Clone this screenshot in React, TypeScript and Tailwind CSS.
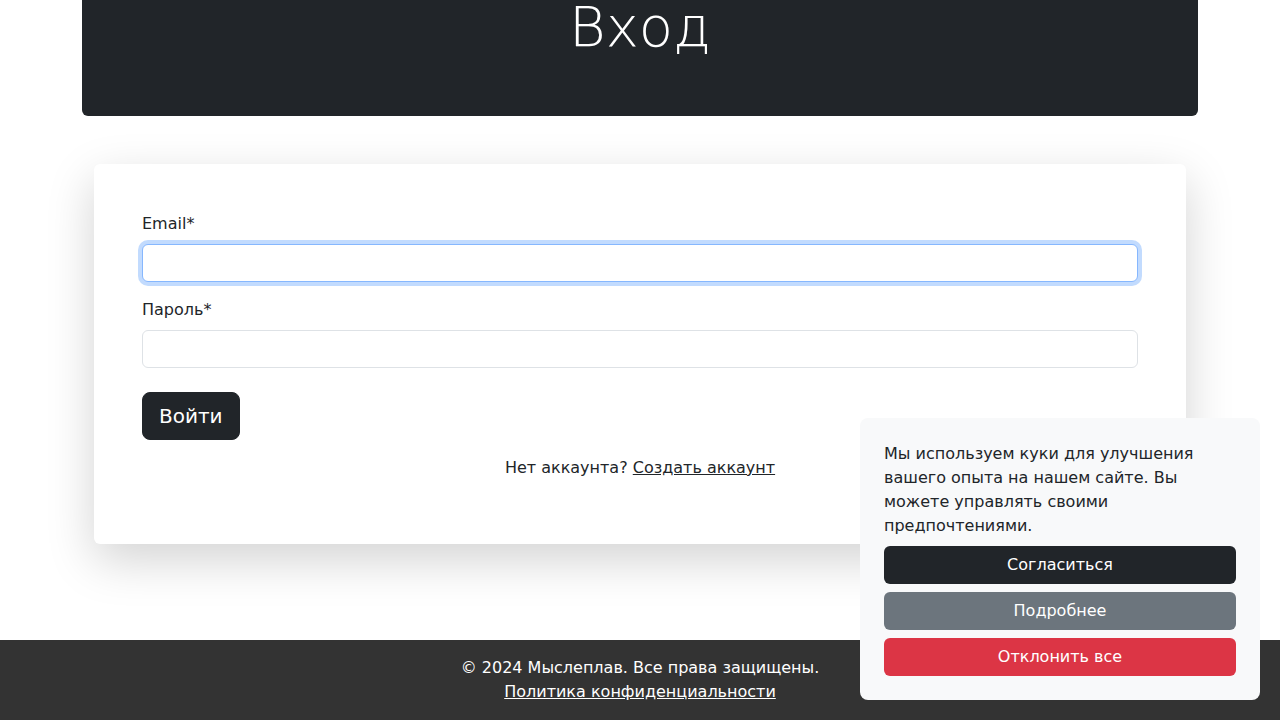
const font = { fontFamily: '"DejaVu Sans", "Liberation Sans", sans-serif' }

const Field = ({ label, focused, last }: { label: string; focused?: boolean; last?: boolean }) => (
    <div className={last ? 'mb-6' : 'mb-4'}>
        <label className="mb-2 block text-base leading-6 text-[#212529]">{label}</label>
        <input
            type="text"
            className={
                focused
                    ? 'block h-[38px] w-full rounded-md border border-[#86b7fe] bg-white px-3 outline-none shadow-[0_0_0_4px_rgba(13,110,253,0.25)]'
                    : 'block h-[38px] w-full rounded-md border border-[#dee2e6] bg-white px-3 outline-none'
            }
        />
    </div>
)

const CookieBanner = () => (
    <div className="fixed right-5 bottom-5 w-[400px] rounded-lg bg-[#f8f9fa] p-6 text-[#212529]">
        <p className="mb-2 text-base leading-6">
            Мы используем куки для улучшения вашего опыта на нашем сайте. Вы можете управлять своими
            предпочтениями.
        </p>
        <div className="flex flex-col gap-2">
            <button type="button" className="h-[38px] w-full rounded-md bg-[#212529] text-base text-white">
                Согласиться
            </button>
            <button type="button" className="h-[38px] w-full rounded-md bg-[#6c757d] text-base text-white">
                Подробнее
            </button>
            <button type="button" className="h-[38px] w-full rounded-md bg-[#dc3545] text-base text-white">
                Отклонить все
            </button>
        </div>
    </div>
)

export default function App() {
    return (
        <div className="flex min-h-screen flex-col bg-white text-[#212529]" style={font}>
            <div className="mx-auto w-[1140px] px-3">
                <header className="flex h-[116px] justify-center rounded-b-md bg-[#212529]">
                    <h1 className="-mt-px text-[56px] leading-none font-light text-white">Вход</h1>
                </header>
                <div className="px-3 pt-12 pb-24">
                    <div className="rounded-md bg-white p-12 shadow-[0_16px_48px_rgba(0,0,0,0.175)]">
                        <Field label="Email*" focused />
                        <Field label="Пароль*" last />
                        <button
                            type="button"
                            className="h-12 rounded-lg border border-[#212529] bg-[#212529] px-4 text-xl leading-[30px] text-white"
                        >
                            Войти
                        </button>
                        <p className="mt-4 mb-4 text-center text-base leading-6">
                            Нет аккаунта?{' '}
                            <a href="#" className="text-[#212529] underline">
                                Создать аккаунт
                            </a>
                        </p>
                    </div>
                </div>
            </div>
            <footer className="mt-auto bg-[#333333] py-4 text-center text-base leading-6 text-white">
                <p>© 2024 Мыслеплав. Все права защищены.</p>
                <a href="#" className="text-white underline">
                    Политика конфиденциальности
                </a>
            </footer>
            <CookieBanner />
        </div>
    )
}
